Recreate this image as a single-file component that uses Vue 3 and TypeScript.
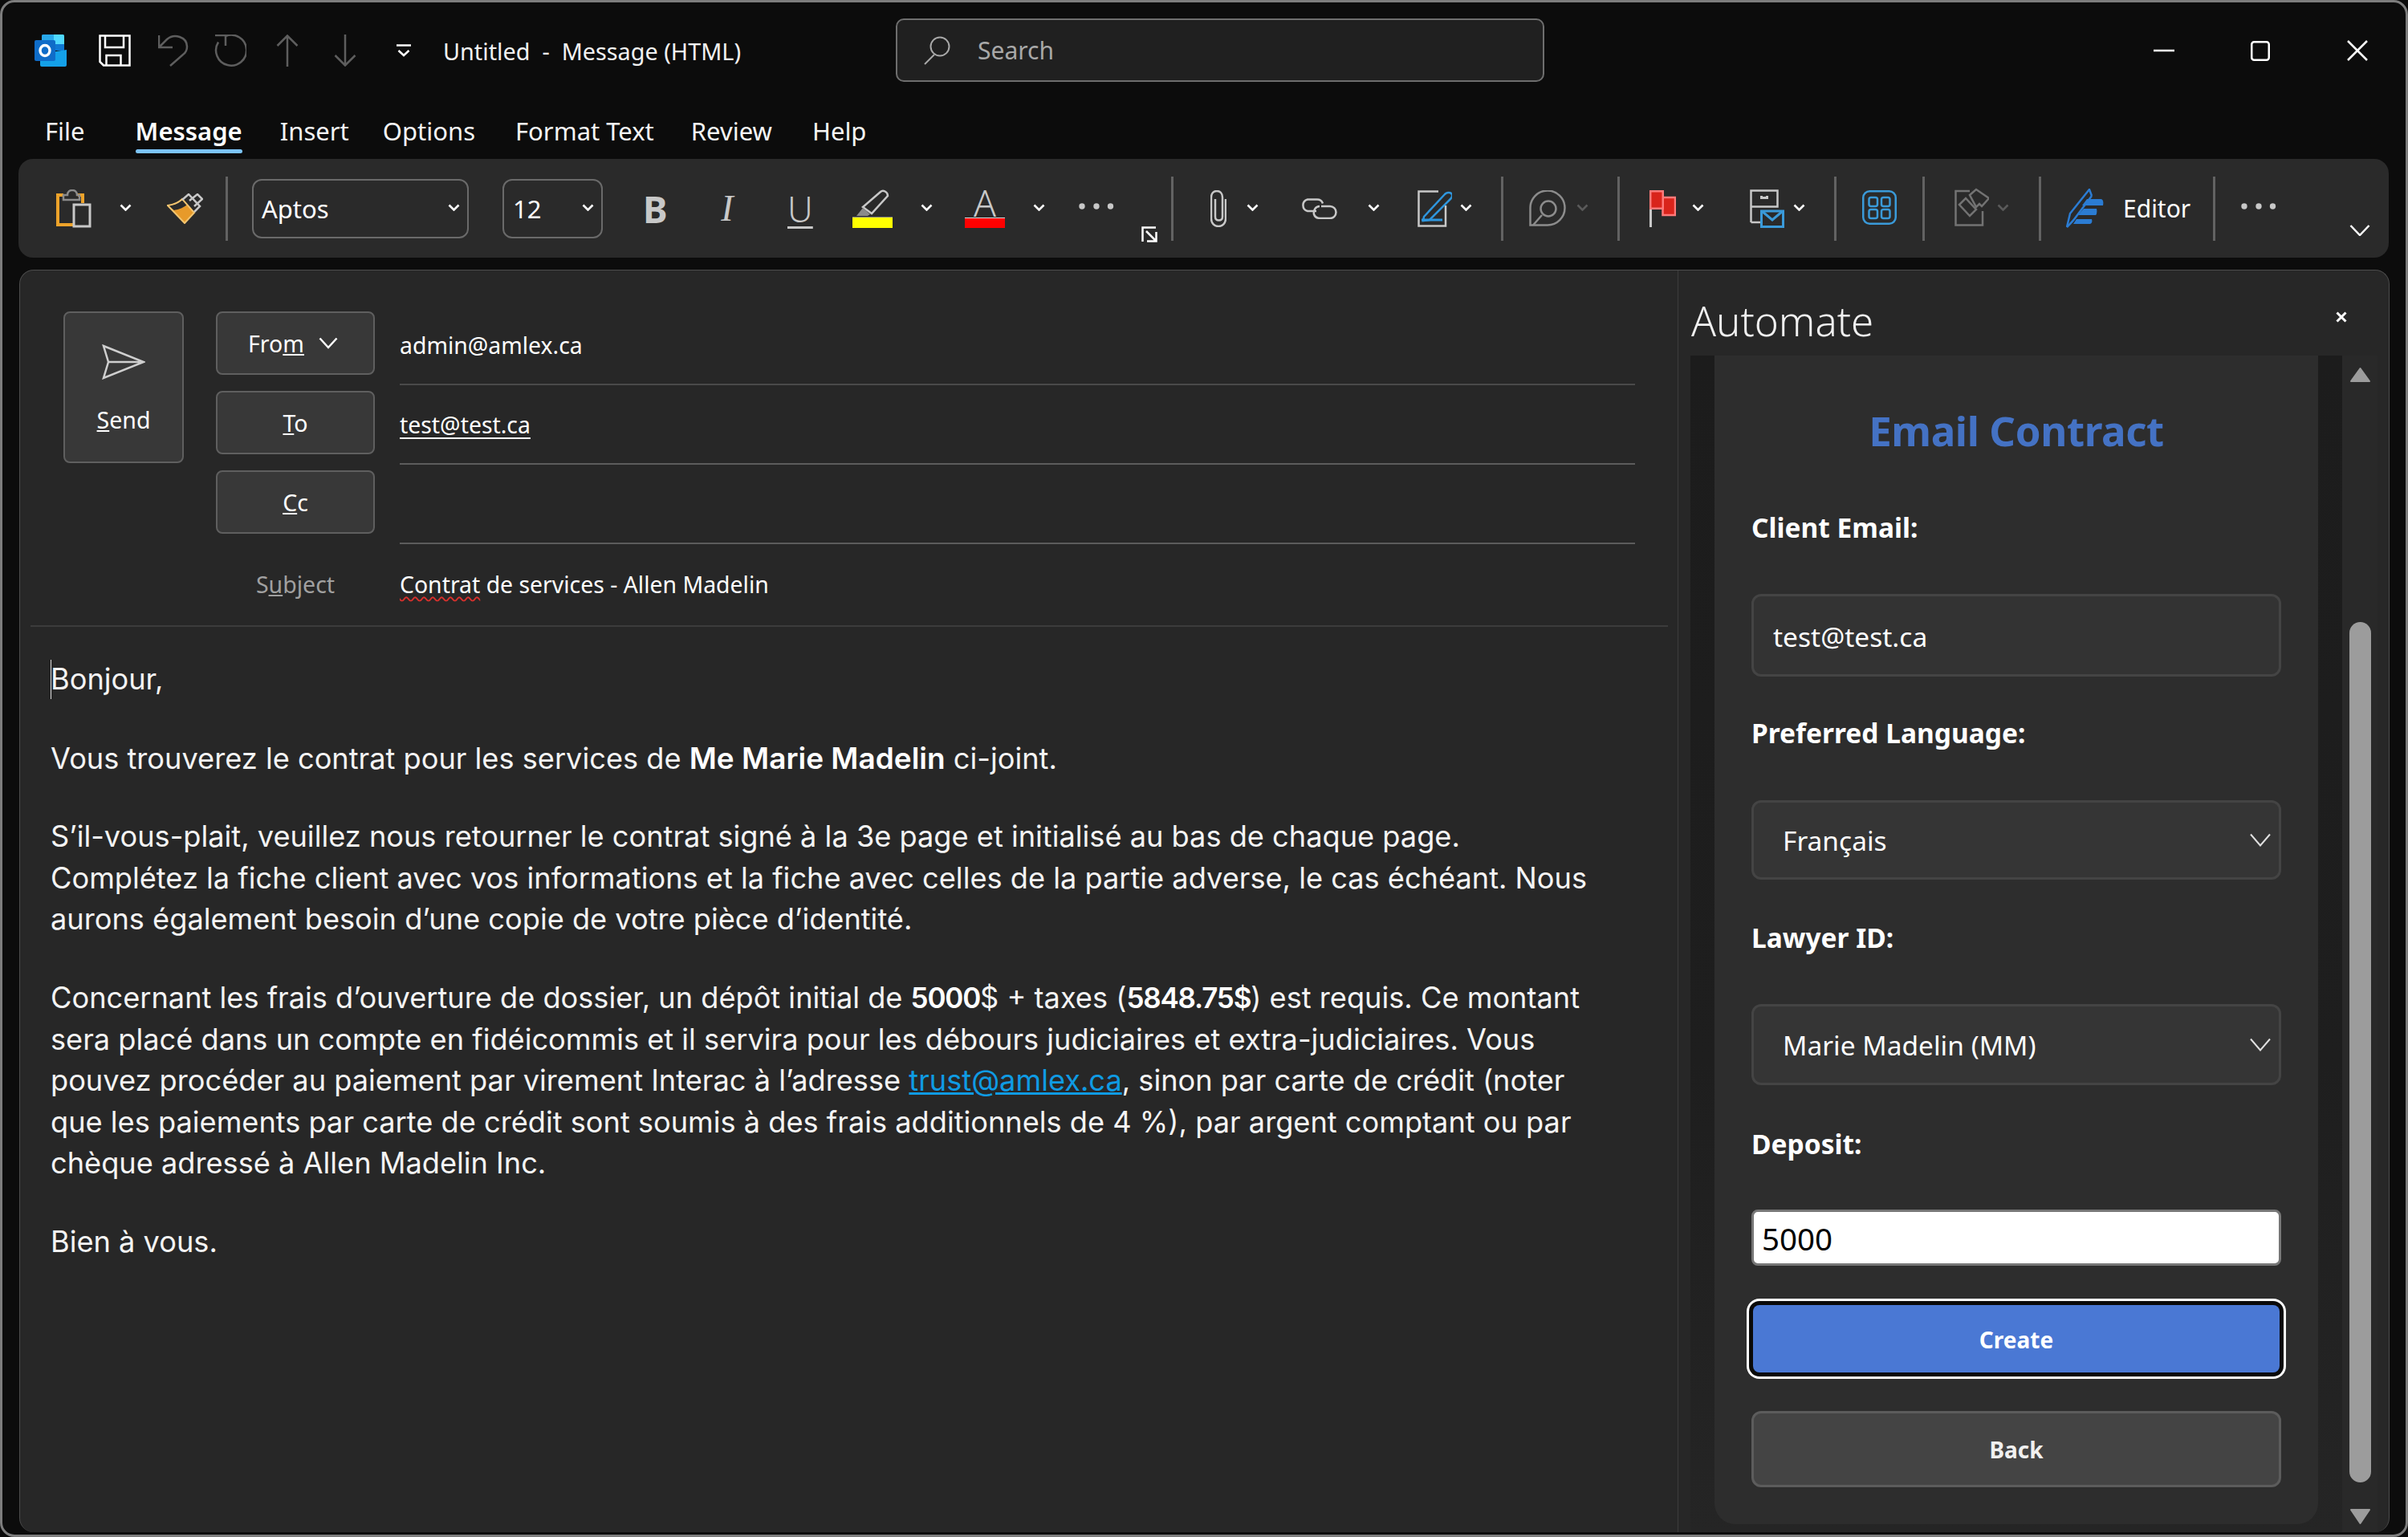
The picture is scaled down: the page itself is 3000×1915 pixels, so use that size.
<script setup lang="ts">
const chevronPath = "M1.5 1.5l6 6 6-6";
const clientEmail = "test@test.ca";
const deposit = "5000";
</script>

<template>
  <div class="window">
    <header class="titlebar">
      <svg class="logo" viewBox="0 0 40 40">
        <path d="M9 2a2 2 0 0 1 2-2h24a2 2 0 0 1 2 2v18H9z" fill="#0f78d4" />
        <path d="M24 0h11a2 2 0 0 1 2 2v10H24z" fill="#50d9ff" />
        <path d="M24 0v12H9V2a2 2 0 0 1 2-2z" fill="#28a8ea" />
        <path d="M7 24l33-5v19a2 2 0 0 1-2 2H9a2 2 0 0 1-2-2z" fill="#14a0e8" />
        <rect y="7" width="26" height="26" rx="2" fill="#0f6cc8" />
        <ellipse cx="13" cy="20" rx="6" ry="6.5" fill="none" stroke="#fff" stroke-width="3.4" />
      </svg>
      <svg class="qa save" viewBox="0 0 40 40">
        <path d="M1.500 1.500h37v37H6L1.500 34z M8 1.500V16h23V1.500 M9.500 38V26h18v12" />
      </svg>
      <svg class="qa undo" viewBox="0 0 40 40">
        <path d="M1 1v15h17 M2 15l9-9c9-8 25-3 25 9 0 5-2 8-5 10L15 39" />
      </svg>
      <svg class="qa redo" viewBox="0 0 40 40">
        <path d="M1 1h13v13 M14 2A19 19 0 1 1 5 9.500" />
      </svg>
      <svg class="qa up" viewBox="0 0 28 40">
        <path d="M14 40V1 M1.500 14L14 1.500 26.500 14" />
      </svg>
      <svg class="qa down" viewBox="0 0 28 40">
        <path d="M14 0v39 M1.500 26L14 38.500 26.500 26" />
      </svg>
      <svg class="custom" viewBox="0 0 18 16">
        <path d="M0 1.500h18 M2.500 8l6.500 6 6.500-6" />
      </svg>
      <span class="doc-title">Untitled&nbsp; -&nbsp; Message (HTML)</span>
      <div class="search">
        <svg viewBox="0 0 34 36"><circle cx="21" cy="13" r="11.500" /><path d="M14 23L2 35" /></svg>
        <span>Search</span>
      </div>
      <div class="win-controls">
        <svg class="win-min" viewBox="0 0 26 4"><path d="M0 2h26" /></svg>
        <svg class="win-max" viewBox="0 0 24 25"><rect x="1.250" y="1.250" width="21.500" height="22.500" rx="3" /></svg>
        <svg class="win-close" viewBox="0 0 26 26"><path d="M1 1l24 24 M25 1L1 25" /></svg>
      </div>
    </header>

    <nav class="tabs">
      <span class="tab tab-file">File</span>
      <span class="tab active">Message</span>
      <span class="tab tab-insert">Insert</span>
      <span class="tab tab-options">Options</span>
      <span class="tab tab-format">Format Text</span>
      <span class="tab tab-review">Review</span>
      <span class="tab">Help</span>
    </nav>

    <div class="ribbon">
      <svg class="ico paste" viewBox="0 0 44 48" fill="none">
        <path d="M9 7H2v37h19" stroke="#eda32a" stroke-width="4" />
        <path d="M27 7h6v10" stroke="#eda32a" stroke-width="4" />
        <path d="M9 13V7h5c0-8 12-8 12 0h3v6z" stroke="#8c8c8c" stroke-width="2.500" />
        <rect x="22" y="19" width="20" height="27" stroke="#c8c8c8" stroke-width="3" />
      </svg>
      <svg class="chev m-chev1" viewBox="0 0 15 9"><path :d="chevronPath" /></svg>
      <svg class="ico brush" viewBox="0 0 45 38" fill="none">
        <path d="M1 15c8-1 14-4 18-8l15 17-12 13z" fill="#e79a2a" />
        <path d="M1 15c8-1 14-4 18-8l6 7c-6 5-12 6-16 7z" fill="#2a2a2a" />
        <path d="M1 15c8-1 14-4 18-8l15 17-12 13z" stroke="#f2c46f" stroke-width="2" />
        <path d="M19 8l8-7 14 15-7 7" stroke="#c8c8c8" stroke-width="2.500" />
        <path d="M28 9l10-8 6 6-10 9" stroke="#c8c8c8" stroke-width="2.500" />
      </svg>
      <i class="sep m-s1" />
      <div class="combo font-combo">
        <span>Aptos</span>
        <svg class="chev" viewBox="0 0 15 9"><path :d="chevronPath" /></svg>
      </div>
      <div class="combo size-combo">
        <span>12</span>
        <svg class="chev" viewBox="0 0 15 9"><path :d="chevronPath" /></svg>
      </div>
      <span class="fmt bold">B</span>
      <span class="fmt italic">I</span>
      <span class="fmt under">U</span>
      <svg class="ico hilite" viewBox="0 0 50 48" fill="none">
        <path d="M13 22L35 3c3-3 9 0 9 5L24 30z" stroke="#c8c8c8" stroke-width="2.500" />
        <path d="M5 33l8-10 9 8-3 2z" fill="#8a8a8a" />
        <path d="M0 35h50" stroke="#ddd" />
        <rect y="35" width="50" height="13" fill="#ff0" />
      </svg>
      <svg class="chev m-chev2" viewBox="0 0 15 9"><path :d="chevronPath" /></svg>
      <div class="font-colour">
        <span>A</span>
        <i />
      </div>
      <svg class="chev m-chev3" viewBox="0 0 15 9"><path :d="chevronPath" /></svg>
      <svg class="dots m-dots1" viewBox="0 0 44 8"><circle cx="4" cy="4" r="3.700" /><circle cx="22" cy="4" r="3.700" /><circle cx="39.500" cy="4" r="3.700" /></svg>
      <svg class="launcher" viewBox="0 0 20 20"><path d="M1.500 19V1.500H18 M7 18.500h11.500V7 M6 6l12 12" /></svg>
      <i class="sep m-s2" />
      <svg class="ico clip" viewBox="0 0 20 46" fill="none">
        <path d="M19 11v24.500C19 41 15 45 10 45S1 41 1 35.500V9c0-5 3-8 7-8s7 3 7 8v24c0 3-2 4.500-4.500 4.500S6 36 6 33V11" stroke="#c8c8c8" stroke-width="2.500" />
      </svg>
      <svg class="chev m-chev4" viewBox="0 0 15 9"><path :d="chevronPath" /></svg>
      <svg class="ico link" viewBox="0 0 46 26" fill="none">
        <path d="M20 16H9A7.500 7.500 0 0 1 9 1.500h12c4 0 6 2 7 5 M26 10h11a7.500 7.500 0 0 1 0 15H25c-4 0-7-2-8-5 C16 15 19 10 24 10" stroke="#c8c8c8" stroke-width="2.500" />
      </svg>
      <svg class="chev m-chev5" viewBox="0 0 15 9"><path :d="chevronPath" /></svg>
      <svg class="ico sign" viewBox="0 0 43 46" fill="none">
        <path d="M26 1.500H1.500V44.500H35V19" stroke="#c8c8c8" stroke-width="2.500" />
        <path d="M8 33L34 5c2-2 6-3 8-1s1 5-1 7L15 37l-8 1z" fill="#2a2a2a" stroke="#2f96dd" stroke-width="2.500" />
        <path d="M5 37h26" stroke="#2f96dd" stroke-width="3" />
      </svg>
      <svg class="chev m-chev6" viewBox="0 0 15 9"><path :d="chevronPath" /></svg>
      <i class="sep m-s3" />
      <svg class="ico comment" viewBox="0 0 46 45" fill="none" stroke="#8c8c8c" stroke-width="2.500">
        <path d="M1.500 43.500V22.500A21.500 21.500 0 1 1 23 43.500z" />
        <circle cx="24" cy="23" r="9.500" />
        <path d="M16 31L5 43.500" />
      </svg>
      <svg class="chev off m-chev7" viewBox="0 0 15 9"><path :d="chevronPath" /></svg>
      <i class="sep m-s4" />
      <svg class="ico flag" viewBox="0 0 33 46">
        <path d="M1.500 22v24" stroke="#c8c8c8" stroke-width="3" />
        <rect x="16.500" y="9" width="15.500" height="22" fill="#d9241b" stroke="#ff7a7a" stroke-width="2.500" />
        <rect x="1.250" y="1.250" width="15.500" height="21.500" fill="#d9241b" stroke="#ff7a7a" stroke-width="2.500" />
      </svg>
      <svg class="chev m-chev8" viewBox="0 0 15 9"><path :d="chevronPath" /></svg>
      <svg class="ico follow" viewBox="0 0 43 48" fill="none">
        <path d="M1.500 41V1.500h33v20h-33 M1.500 41H13" stroke="#c8c8c8" stroke-width="2.500" />
        <path d="M13 8v4h10V8h-3v1h-4V8z" fill="#c8c8c8" />
        <rect x="14.500" y="27" width="27" height="19.500" stroke="#3a9ad9" stroke-width="3" />
        <path d="M15 27l13 11 13-11" stroke="#3a9ad9" stroke-width="3" />
      </svg>
      <svg class="chev m-chev9" viewBox="0 0 15 9"><path :d="chevronPath" /></svg>
      <i class="sep m-s5" />
      <svg class="ico apps" viewBox="0 0 43 43" fill="none" stroke="#3a9ad9" stroke-width="2.500">
        <rect x="1.250" y="1.250" width="40.500" height="40.500" rx="8" />
        <rect x="8.500" y="9" width="10.500" height="11" rx="2.500" />
        <rect x="24" y="9" width="10.500" height="11" rx="2.500" />
        <rect x="8.500" y="24" width="10.500" height="11" rx="2.500" />
        <rect x="24" y="24" width="10.500" height="11" rx="2.500" />
      </svg>
      <i class="sep m-s6" />
      <svg class="ico sens" viewBox="0 0 43 48" fill="none" stroke="#737373" stroke-width="2.500">
        <path d="M19 4H1.500V46.500H35V29" />
        <path d="M6 21l8-8 13 14-8 8z" />
        <path d="M18 8l8-7 16 11-9 10-3-3-4 4z" transform="translate(1 1)" />
      </svg>
      <svg class="chev off m-chev10" viewBox="0 0 15 9"><path :d="chevronPath" /></svg>
      <i class="sep m-s7" />
      <svg class="ico editor" viewBox="0 0 48 49">
        <path d="M1 48L5 31 29 1l3 8" fill="none" stroke="#2b7cd3" stroke-width="2.500" />
        <path d="M1 48C5 44 9 40 11 37L32 9" fill="none" stroke="#2b7cd3" stroke-width="2.500" />
        <path d="M26 13h17c3 0 4 3 3 8H20z M22 25h16c1 3 0 8-1 8H15z M13 38h19c1 3 0 6-2 6H9z" fill="#2b7cd3" />
      </svg>
      <span class="editor-label">Editor</span>
      <i class="sep m-s8" />
      <svg class="dots m-dots2" viewBox="0 0 44 8"><circle cx="4" cy="4" r="3.700" /><circle cx="22" cy="4" r="3.700" /><circle cx="39.500" cy="4" r="3.700" /></svg>
      <svg class="collapse" viewBox="0 0 26 14"><path d="M1.500 1L13 13 24.500 1" /></svg>
    </div>

    <section class="sheet">
      <div class="compose">
        <div class="head">
          <button class="btn send">
            <svg viewBox="0 0 54 44"><path d="M2 2l50 20L2 42l6-20z M8 22h44" /></svg>
            <span><u>S</u>end</span>
          </button>
          <div class="fields">
            <div class="f-label">
              <button class="btn small from">
                <span>Fro<u>m</u></span>
                <svg viewBox="0 0 24 15"><path d="M1.500 1.500L12 13 22.500 1.500" /></svg>
              </button>
            </div>
            <div class="f-value">admin@amlex.ca</div>
            <div class="f-label"><button class="btn small"><u>T</u>o</button></div>
            <div class="f-value strong"><u>test@test.ca</u></div>
            <div class="f-label"><button class="btn small"><u>C</u>c</button></div>
            <div class="f-value strong" />
            <div class="f-label subject-label"><span>S<u>u</u>bject</span></div>
            <div class="f-value subject"><span><span class="typo">Contrat</span> de services - Allen Madelin</span></div>
          </div>
        </div>
        <div class="divider" />
        <article class="body">
          <i class="caret" />
          <p>Bonjour,</p>
          <p>Vous trouverez le contrat pour les services de <b>Me Marie Madelin</b> ci-joint.</p>
          <p>
            S’il-vous-plait, veuillez nous retourner le contrat signé à la 3e page et initialisé au bas de chaque page.<br />
            Complétez la fiche client avec vos informations et la fiche avec celles de la partie adverse, le cas échéant. Nous<br />
            aurons également besoin d’une copie de votre pièce d’identité.
          </p>
          <p>
            Concernant les frais d’ouverture de dossier, un dépôt initial de <b class="num">5000</b>$ + taxes (<b class="num">5848.75$</b>) est requis. Ce montant<br />
            sera placé dans un compte en fidéicommis et il servira pour les débours judiciaires et extra-judiciaires. Vous<br />
            pouvez procéder au paiement par virement Interac à l’adresse <a href="#">trust@amlex.ca</a>, sinon par carte de crédit (noter<br />
            que les paiements par carte de crédit sont soumis à des frais additionnels de 4 %), par argent comptant ou par<br />
            chèque adressé à Allen Madelin Inc.
          </p>
          <p>Bien à vous.</p>
        </article>
      </div>

      <aside class="pane">
        <div class="pane-head">
          <span class="pane-title">Automate</span>
          <svg class="pane-close" viewBox="0 0 14 14"><path d="M1.500 1.500l11 11 M12.500 1.500l-11 11" /></svg>
        </div>
        <div class="pane-body">
          <div class="gutter">
            <form class="card" @submit.prevent>
              <h1>Email Contract</h1>
              <label class="l-email">Client Email:</label>
              <input class="text-in email" :value="clientEmail" />
              <label class="l-lang">Preferred Language:</label>
              <div class="select lang">
                <span>Français</span>
                <svg viewBox="0 0 26 17"><path d="M1 1.500l12 14 12-14" /></svg>
              </div>
              <label class="l-lawyer">Lawyer ID:</label>
              <div class="select lawyer">
                <span>Marie Madelin (MM)</span>
                <svg viewBox="0 0 26 17"><path d="M1 1.500l12 14 12-14" /></svg>
              </div>
              <label class="l-deposit">Deposit:</label>
              <input class="deposit" :value="deposit" />
              <button class="create">Create</button>
              <button class="back">Back</button>
            </form>
          </div>
          <div class="scrollbar">
            <svg class="arrow" viewBox="0 0 27 21"><path d="M13.500 2L25 18H2z" /></svg>
            <div class="thumb" />
            <svg class="arrow bottom" viewBox="0 0 27 21"><path d="M2 2h23L13.500 19z" /></svg>
          </div>
        </div>
      </aside>
    </section>
  </div>
</template>

<style>
html,
body {
  margin: 0;
  background: #0c0c0c;
}
</style>

<style scoped>
* {
  box-sizing: border-box;
}
.window {
  width: 3000px;
  height: 1915px;
  border: 3px solid #7d7d7d;
  border-radius: 18px;
  background: #0c0c0c;
  color: #fff;
  font-family: "Noto Sans", sans-serif;
  font-size: 28px;
  display: flex;
  flex-direction: column;
  overflow: hidden;
}

/* title bar */
.titlebar {
  height: 120px;
  flex: none;
  display: flex;
  align-items: center;
  padding-left: 40px;
}
.logo {
  width: 40px;
  height: 40px;
}
.qa {
  height: 40px;
  fill: none;
  stroke: #5e5e5e;
  stroke-width: 2.5;
}
.save {
  width: 40px;
  margin-left: 40px;
  stroke: #fff;
  fill: none;
}
.undo {
  width: 40px;
  margin-left: 34px;
}
.redo {
  width: 40px;
  margin-left: 30px;
}
.up {
  width: 28px;
  margin-left: 37px;
}
.down {
  width: 28px;
  margin-left: 44px;
}
.custom {
  width: 18px;
  height: 16px;
  margin-left: 50px;
  fill: none;
  stroke: #fff;
  stroke-width: 2.5;
}
.doc-title {
  margin-left: 40px;
  width: 564px;
  font-size: 28.8px;
  white-space: nowrap;
  color: #f2f2f2;
}
.search {
  width: 808px;
  height: 79px;
  margin-top: -1px;
  border: 2px solid #6e6e6e;
  border-radius: 10px;
  background: #202020;
  display: flex;
  align-items: center;
  padding-left: 32px;
  color: #a8a8a8;
  font-size: 30px;
}
.search svg {
  width: 34px;
  height: 36px;
  margin-right: 34px;
  fill: none;
  stroke: #a8a8a8;
  stroke-width: 2;
}
.win-controls {
  margin-left: auto;
  display: flex;
  align-items: center;
  padding-right: 47px;
  fill: none;
  stroke: #fff;
  stroke-width: 2.5;
}
.win-min {
  width: 26px;
  height: 4px;
  margin-right: 95px;
}
.win-max {
  width: 24px;
  height: 25px;
  margin-right: 96px;
}
.win-close {
  width: 26px;
  height: 26px;
}

/* tabs */
.tabs {
  height: 75px;
  flex: none;
  display: flex;
  align-items: center;
  padding: 5px 0 0 53px;
  gap: 47px;
  font-size: 31px;
  white-space: nowrap;
}
.tab {
  position: relative;
  color: #f5f5f5;
}
.tab-file {
  margin-right: 16px;
}
.tab-insert {
  margin-right: -5px;
}
.tab-options {
  margin-right: 3px;
}
.tab-format {
  margin-right: -1px;
}
.tab-review {
  margin-right: 3px;
}
.tab.active {
  font-weight: 600;
  color: #fff;
}
.tab.active::after {
  content: "";
  position: absolute;
  left: 0;
  right: 0;
  bottom: -7px;
  height: 5px;
  border-radius: 3px;
  background: #7cc3f7;
}

/* ribbon */
.ribbon {
  height: 123px;
  flex: none;
  margin: 0 21px 0 20px;
  border-radius: 18px;
  background: #2a2a2a;
  display: flex;
  align-items: center;
  padding-left: 47px;
  color: #c8c8c8;
}
.ribbon svg {
  flex: none;
}
.chev {
  width: 15px;
  height: 9px;
  margin-top: -2px;
  fill: none;
  stroke: #fff;
  stroke-width: 2.6;
}
.chev.off {
  stroke: #5a5a5a;
}
.sep {
  flex: none;
  width: 3px;
  height: 80px;
  background: #626262;
}
.paste {
  width: 44px;
  height: 48px;
}
.m-chev1 {
  margin-left: 35px;
}
.brush {
  width: 45px;
  height: 38px;
  margin-left: 44px;
}
.m-s1 {
  margin-left: 28px;
}
.combo {
  flex: none;
  height: 74px;
  border: 2px solid #6a6a6a;
  border-radius: 12px;
  display: flex;
  align-items: center;
  justify-content: space-between;
  padding: 0 9px 0 10px;
  color: #fff;
  font-size: 31px;
}
.font-combo {
  width: 270px;
  margin-left: 30px;
}
.size-combo {
  width: 125px;
  margin-left: 42px;
  padding-left: 11px;
}
.fmt {
  flex: none;
  line-height: 48px;
  font-size: 46px;
  color: #c8c8c8;
}
.bold {
  width: 27px;
  margin-left: 50px;
  font-weight: 700;
}
.italic {
  width: 22px;
  margin-left: 67px;
  font-family: "Liberation Serif", serif;
  font-style: italic;
  text-align: center;
}
.under {
  width: 31px;
  margin-left: 64px;
  text-decoration: underline;
  text-underline-offset: 5px;
  text-decoration-thickness: 3px;
  font-weight: 300;
  font-size: 44px;
  text-align: center;
}
.hilite {
  width: 50px;
  height: 48px;
  margin-left: 50px;
}
.m-chev2 {
  margin-left: 35px;
}
.font-colour {
  flex: none;
  width: 50px;
  height: 48px;
  margin-left: 40px;
  text-align: center;
  font-size: 46px;
  font-weight: 300;
}
.font-colour span {
  display: block;
  height: 35px;
  line-height: 33px;
}
.font-colour i {
  display: block;
  height: 13px;
  border-top: 1px solid #ddd;
  background: #f00;
}
.m-chev3 {
  margin-left: 35px;
}
.dots {
  width: 44px;
  height: 8px;
  margin-bottom: 5px;
  fill: #c8c8c8;
}
.m-dots1 {
  margin-left: 42px;
}
.launcher {
  width: 20px;
  height: 20px;
  margin: 64px 0 0 34px;
  fill: none;
  stroke: #fff;
  stroke-width: 2.5;
}
.m-s2 {
  margin-left: 17px;
}
.clip {
  width: 20px;
  height: 46px;
  margin-left: 46px;
}
.m-chev4 {
  margin-left: 25px;
}
.link {
  width: 46px;
  height: 26px;
  margin-left: 52px;
}
.m-chev5 {
  margin-left: 38px;
}
.sign {
  width: 43px;
  height: 46px;
  margin-left: 47px;
}
.m-chev6 {
  margin-left: 10px;
}
.m-s3 {
  margin-left: 36px;
}
.comment {
  width: 46px;
  height: 45px;
  margin-left: 32px;
}
.m-chev7 {
  margin-left: 13px;
}
.m-s4 {
  margin-left: 36px;
}
.flag {
  width: 33px;
  height: 46px;
  margin-left: 37px;
}
.m-chev8 {
  margin-left: 20px;
}
.follow {
  width: 43px;
  height: 48px;
  margin-left: 57px;
}
.m-chev9 {
  margin-left: 11px;
}
.m-s5 {
  margin-left: 36px;
}
.apps {
  width: 43px;
  height: 43px;
  margin: -2px 0 0 32px;
}
.m-s6 {
  margin-left: 32px;
}
.sens {
  width: 43px;
  height: 48px;
  margin: -4px 0 0 37px;
}
.m-chev10 {
  margin-left: 10px;
}
.m-s7 {
  margin-left: 37px;
}
.editor {
  width: 48px;
  height: 49px;
  margin-left: 31px;
}
.editor-label {
  width: 83px;
  margin-left: 23px;
  color: #fff;
  font-size: 30px;
  white-space: nowrap;
}
.m-s8 {
  margin-left: 29px;
}
.m-dots2 {
  margin-left: 32px;
}
.collapse {
  width: 26px;
  height: 14px;
  margin: 54px 0 0 91px;
  fill: none;
  stroke: #fff;
  stroke-width: 2.5;
}

/* message sheet */
.sheet {
  flex: 1;
  display: flex;
  margin: 15px 20px 3px 21px;
  border: 1px solid #4c4c4c;
  border-bottom: 0;
  border-radius: 18px;
  background: #272727;
  overflow: hidden;
}
.compose {
  width: 2065px;
  flex: none;
  position: relative;
}
.head {
  display: flex;
  align-items: flex-start;
  padding-left: 54px;
}
.btn {
  font-family: inherit;
  color: #fff;
  background: #383838;
  border: 2px solid #5f5f5f;
  border-radius: 8px;
  font-size: 28.5px;
}
.send {
  width: 150px;
  height: 189px;
  margin-top: 51px;
  flex: none;
  display: flex;
  flex-direction: column;
  align-items: center;
  padding-top: 39px;
  gap: 31px;
}
.send svg {
  width: 54px;
  height: 44px;
  fill: none;
  stroke: #cfcfcf;
  stroke-width: 2.5;
}
.fields {
  display: grid;
  grid-template-columns: 198px 1539px;
  grid-template-rows: 99px 99px 99px 101px;
  column-gap: 31px;
  margin: 44px 0 0 40px;
}
.f-label {
  padding-top: 7px;
}
.small {
  width: 198px;
  height: 79px;
}
.from {
  display: flex;
  align-items: center;
  justify-content: center;
  gap: 18px;
  padding-right: 12px;
}
.from svg {
  width: 24px;
  height: 15px;
  fill: none;
  stroke: #fff;
  stroke-width: 2.5;
}
.f-value {
  border-bottom: 2px solid #4a4a4a;
  display: flex;
  align-items: center;
  font-size: 28.4px;
  white-space: nowrap;
}
.f-value.strong {
  border-bottom-color: #5c5c5c;
}
.f-value u {
  text-underline-offset: 5px;
}
.subject-label {
  padding: 0 0 2px;
  display: flex;
  align-items: center;
  justify-content: center;
  color: #a0a0a0;
  font-size: 28.5px;
}
.subject {
  border-bottom: 0;
  padding-bottom: 2px;
}
.typo {
  text-decoration: underline wavy #d8302c 1.5px;
  text-underline-offset: 4px;
}
.divider {
  height: 2px;
  margin: 0 12px 0 13px;
  background: #3c3c3c;
}
.body {
  position: relative;
  padding: 40px 0 0 38px;
  font-family: Inter, sans-serif;
  font-size: 36.2px;
  line-height: 51.6px;
  white-space: nowrap;
  color: #f4f4f4;
}
.body p {
  margin: 0 0 46px;
}
.body b {
  font-size: 37px;
  font-weight: 600;
  color: #fff;
}
.body b.num {
  font-size: 35px;
  letter-spacing: -1.2px;
}
.body a {
  color: #0f9be3;
}
.caret {
  position: absolute;
  left: 38px;
  top: 41px;
  width: 1px;
  height: 49px;
  background: #ddd;
}

/* task pane */
.pane {
  flex: 1;
  display: flex;
  flex-direction: column;
  border-left: 1px solid #3c3c3c;
}
.pane-head {
  height: 106px;
  flex: none;
  display: flex;
  align-items: center;
  justify-content: space-between;
  padding: 0 52px 0 16px;
}
.pane-title {
  font-size: 51px;
  font-weight: 300;
  color: #f0f0f0;
  margin-top: 18px;
}
.pane-close {
  width: 14px;
  height: 14px;
  margin-top: 10px;
  fill: none;
  stroke: #fff;
  stroke-width: 3;
}
.pane-body {
  flex: 1;
  display: flex;
  margin: 0 14px 0 15px;
  min-height: 0;
}
.gutter {
  width: 812px;
  height: 1466px;
  flex: none;
  padding: 0 30px;
  overflow: hidden;
  background: linear-gradient(to bottom, #1c1c1c 0, #1e1e1e 60%, #252525 100%);
}
.card {
  width: 752px;
  height: 1456px;
  padding: 0 46px 0 46px;
  background: #2d2d2d;
  border-radius: 0 0 26px 26px;
  display: flex;
  flex-direction: column;
  color: #fff;
}
h1 {
  margin: 58px 0 0;
  height: 70px;
  line-height: 70px;
  text-align: center;
  font-size: 51px;
  font-weight: 700;
  letter-spacing: -0.4px;
  color: #4472c4;
}
label {
  height: 50px;
  line-height: 48px;
  font-size: 33.5px;
  font-weight: 700;
}
.l-email {
  margin-top: 62px;
}
.l-lang {
  margin-top: 46px;
}
.l-lawyer {
  margin-top: 48px;
}
.l-deposit {
  margin-top: 49px;
}
.text-in {
  font-family: inherit;
  color: #fff;
  background: #333;
  border: 3px solid #444;
  border-radius: 12px;
  outline: none;
}
.email {
  height: 103px;
  margin-top: 57px;
  padding: 2px 24px 0;
  font-size: 33.5px;
}
.select {
  display: flex;
  align-items: center;
  justify-content: space-between;
  background: #353535;
  border: 3px solid #444;
  border-radius: 12px;
  padding: 0 10px 0 36px;
  font-size: 33.5px;
}
.select svg {
  width: 26px;
  height: 17px;
  fill: none;
  stroke: #e0e0e0;
  stroke-width: 2;
}
.lang {
  height: 99px;
  margin-top: 58px;
}
.lawyer {
  height: 101px;
  margin-top: 57px;
}
.deposit {
  height: 70px;
  margin-top: 56px;
  padding: 2px 10px 0;
  font-family: inherit;
  font-size: 38.5px;
  color: #000;
  background: #fff;
  border: 3px solid #777;
  border-radius: 8px;
  outline: none;
}
.create,
.back {
  font-family: inherit;
  font-size: 28px;
  font-weight: 700;
  color: #fff;
}
.create {
  height: 84px;
  margin: 49px 2px 0;
  padding-top: 2px;
  border: 0;
  border-radius: 8px;
  background: #4a78d4;
  box-shadow: 0 0 0 5px #0a0a0a, 0 0 0 8px #fff;
}
.back {
  height: 95px;
  margin-top: 48px;
  background: #444;
  border: 3px solid #5c5c5c;
  border-radius: 12px;
  color: #f0f0f0;
}
.scrollbar {
  flex: 1;
  height: 1466px;
  padding: 14px 0 0 9px;
  background: #292929;
  display: flex;
  flex-direction: column;
}
.arrow {
  width: 27px;
  height: 21px;
  flex: none;
  fill: #9c9c9c;
  stroke: #9c9c9c;
  stroke-width: 2;
  stroke-linejoin: round;
}
.thumb {
  width: 27px;
  height: 1072px;
  flex: none;
  margin-top: 297px;
  border-radius: 14px;
  background: #9c9c9c;
}
.arrow.bottom {
  margin-top: 32px;
}
</style>
